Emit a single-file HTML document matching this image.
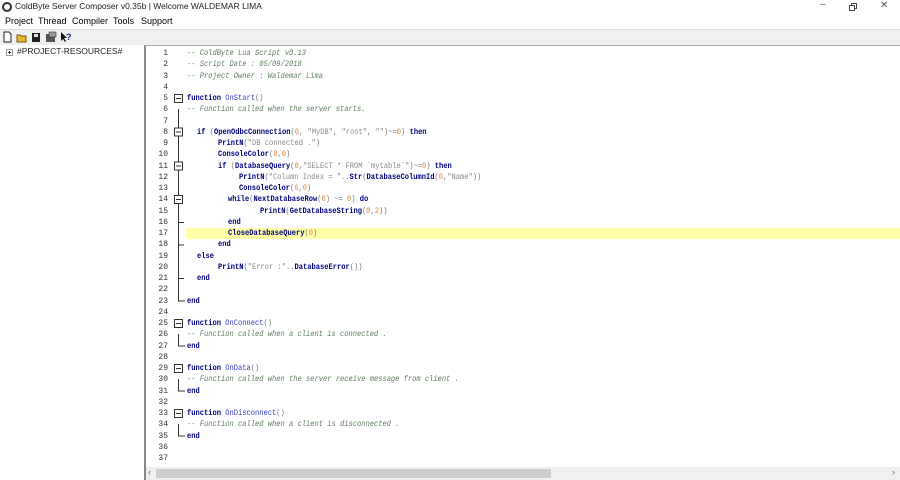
<!DOCTYPE html>
<html><head><meta charset="utf-8"><style>
*{margin:0;padding:0;box-sizing:border-box}
body{width:900px;height:480px;overflow:hidden;background:#fff;font-family:"Liberation Sans",sans-serif;position:relative}
.t{position:absolute;font-size:9px;color:#000;white-space:nowrap}
#code{position:absolute;left:0;top:48px;font-family:"Liberation Mono",monospace;font-size:8px;}
.l{position:absolute;height:11.25px;line-height:11.25px;white-space:pre;transform:scaleX(0.885);transform-origin:0 50%}
.n{position:absolute;width:20px;text-align:right;left:148px;font-family:"Liberation Mono",monospace;font-size:8px;color:#333;line-height:11.25px;height:11.25px}
.c{color:#5f7f5f;font-style:italic}
.k{color:#00007f;font-weight:bold}
.f{color:#3a3acf}
.s{color:#8a8a8a}
.d{color:#e0803a}
.p{color:#777}
</style></head><body>
<div style="position:absolute;left:0;top:0;width:900px;height:14px;background:#fff"></div>
<svg style="position:absolute;left:2px;top:2px" width="10" height="10"><circle cx="5" cy="5" r="4" fill="none" stroke="#333" stroke-width="2"/></svg>
<div class="t" style="left:15px;top:1px;font-size:8.5px;color:#222">ColdByte Server Composer v0.35b | Welcome WALDEMAR LIMA</div>
<div class="t" style="left:820px;top:-1px;font-size:10px;color:#555">–</div>
<svg style="position:absolute;left:849px;top:3px" width="9" height="8"><rect x="0.5" y="2.5" width="5" height="5" fill="none" stroke="#444"/><path d="M2.5 2.5V.5h5v5h-2" fill="none" stroke="#444"/></svg>
<div class="t" style="left:880px;top:0px;font-size:10px;color:#555">✕</div>
<div class="t" style="left:5px;top:16px">Project</div>
<div class="t" style="left:38px;top:16px">Thread</div>
<div class="t" style="left:72px;top:16px">Compiler</div>
<div class="t" style="left:113px;top:16px">Tools</div>
<div class="t" style="left:141px;top:16px">Support</div>
<div style="position:absolute;left:0;top:29px;width:900px;height:16px;background:#f0f0f0;border-top:1px solid #ddd"></div>
<svg style="position:absolute;left:2px;top:31px" width="80" height="12">
<path d="M2 1h5l2 2v8H2z" fill="#fff" stroke="#222"/>
<path d="M15 4h3l1 1h5v6h-9z" fill="#e8b830" stroke="#7a5a10"/>
<rect x="30" y="2" width="8" height="9" fill="#222"/><rect x="32" y="3" width="4" height="3" fill="#ddd"/>
<rect x="44" y="3" width="9" height="8" fill="#555"/><rect x="47" y="1" width="7" height="5" fill="#999" stroke="#333" stroke-width=".6"/>
<path d="M59 1v9l2-2 2 3 1-1-2-3h3z" fill="#111"/><text x="64" y="9" font-size="9" font-weight="bold" fill="#1a2a8a" font-family="Liberation Sans">?</text>
</svg>
<div style="position:absolute;left:0;top:45px;width:144px;height:435px;background:#fff"></div>
<svg style="position:absolute;left:6px;top:49px" width="7" height="7"><rect x=".5" y=".5" width="6" height="6" fill="#fff" stroke="#999"/><path d="M2 3.5h3M3.5 2v3" stroke="#444"/></svg>
<div class="t" style="left:17px;top:46px;font-size:8.5px;color:#222">#PROJECT-RESOURCES#</div>
<div style="position:absolute;left:144px;top:45px;width:756px;height:435px;border-left:2px solid #888;border-top:1px solid #aaa;background:#fff"></div>
<div style="position:absolute;left:186px;top:228px;width:714px;height:11.25px;background:#ffffa8"></div>
<div id="code">
<div class="n" style="top:0">1</div><div class="n" style="top:11.25px">2</div><div class="n" style="top:22.5px">3</div><div class="n" style="top:33.75px">4</div><div class="n" style="top:45px">5</div><div class="n" style="top:56.25px">6</div><div class="n" style="top:67.5px">7</div><div class="n" style="top:78.75px">8</div><div class="n" style="top:90px">9</div><div class="n" style="top:101.25px">10</div><div class="n" style="top:112.5px">11</div><div class="n" style="top:123.75px">12</div><div class="n" style="top:135px">13</div><div class="n" style="top:146.25px">14</div><div class="n" style="top:157.5px">15</div><div class="n" style="top:168.75px">16</div><div class="n" style="top:180px">17</div><div class="n" style="top:191.25px">18</div><div class="n" style="top:202.5px">19</div><div class="n" style="top:213.75px">20</div><div class="n" style="top:225px">21</div><div class="n" style="top:236.25px">22</div><div class="n" style="top:247.5px">23</div><div class="n" style="top:258.75px">24</div><div class="n" style="top:270px">25</div><div class="n" style="top:281.25px">26</div><div class="n" style="top:292.5px">27</div><div class="n" style="top:303.75px">28</div><div class="n" style="top:315px">29</div><div class="n" style="top:326.25px">30</div><div class="n" style="top:337.5px">31</div><div class="n" style="top:348.75px">32</div><div class="n" style="top:360px">33</div><div class="n" style="top:371.25px">34</div><div class="n" style="top:382.5px">35</div><div class="n" style="top:393.75px">36</div><div class="n" style="top:405px">37</div>

<div class="l c" style="left:187px;top:0">-- ColdByte Lua Script v0.13</div>
<div class="l c" style="left:187px;top:11.25px">-- Script Date : 05/09/2018</div>
<div class="l c" style="left:187px;top:22.5px">-- Project Owner : Waldemar Lima</div>
<div class="l" style="left:187px;top:45px"><span class="k">function</span> <span class="f">OnStart</span><span class="p">()</span></div>
<div class="l c" style="left:187px;top:56.25px">-- Function called when the server starts.</div>
<div class="l" style="left:197px;top:78.75px"><span class="k">if</span> <span class="p">(</span><span class="k">OpenOdbcConnection</span><span class="p">(</span><span class="d">0</span><span class="p">, </span><span class="s">"MyDB"</span><span class="p">, </span><span class="s">"root"</span><span class="p">, </span><span class="s">""</span><span class="p">)~=</span><span class="d">0</span><span class="p">)</span> <span class="k">then</span></div>
<div class="l" style="left:218px;top:90px"><span class="k">PrintN</span><span class="p">(</span><span class="s">"DB connected ."</span><span class="p">)</span></div>
<div class="l" style="left:218px;top:101.25px"><span class="k">ConsoleColor</span><span class="p">(</span><span class="d">8</span><span class="p">,</span><span class="d">0</span><span class="p">)</span></div>
<div class="l" style="left:218px;top:112.5px"><span class="k">if</span> <span class="p">(</span><span class="k">DatabaseQuery</span><span class="p">(</span><span class="d">0</span><span class="p">,</span><span class="s">"SELECT * FROM `mytable`"</span><span class="p">)~=</span><span class="d">0</span><span class="p">)</span> <span class="k">then</span></div>
<div class="l" style="left:239px;top:123.75px"><span class="k">PrintN</span><span class="p">(</span><span class="s">"Column Index = "</span><span class="p">..</span><span class="k">Str</span><span class="p">(</span><span class="k">DatabaseColumnId</span><span class="p">(</span><span class="d">0</span><span class="p">,</span><span class="s">"Name"</span><span class="p">))</span></div>
<div class="l" style="left:239px;top:135px"><span class="k">ConsoleColor</span><span class="p">(</span><span class="d">6</span><span class="p">,</span><span class="d">0</span><span class="p">)</span></div>
<div class="l" style="left:228px;top:146.25px"><span class="k">while</span><span class="p">(</span><span class="k">NextDatabaseRow</span><span class="p">(</span><span class="d">0</span><span class="p">) ~= </span><span class="d">0</span><span class="p">)</span> <span class="k">do</span></div>
<div class="l" style="left:260px;top:157.5px"><span class="k">PrintN</span><span class="p">(</span><span class="k">GetDatabaseString</span><span class="p">(</span><span class="d">0</span><span class="p">,</span><span class="d">2</span><span class="p">))</span></div>
<div class="l k" style="left:228px;top:168.75px">end</div>
<div class="l" style="left:228px;top:180px"><span class="k">CloseDatabaseQuery</span><span class="p">(</span><span class="d">0</span><span class="p">)</span></div>
<div class="l k" style="left:218px;top:191.25px">end</div>
<div class="l k" style="left:197px;top:202.5px">else</div>
<div class="l" style="left:218px;top:213.75px"><span class="k">PrintN</span><span class="p">(</span><span class="s">"Error :"</span><span class="p">..</span><span class="k">DatabaseError</span><span class="p">())</span></div>
<div class="l k" style="left:197px;top:225px">end</div>
<div class="l k" style="left:187px;top:247.5px">end</div>
<div class="l" style="left:187px;top:270px"><span class="k">function</span> <span class="f">OnConnect</span><span class="p">()</span></div>
<div class="l c" style="left:187px;top:281.25px">-- Function called when a client is connected .</div>
<div class="l k" style="left:187px;top:292.5px">end</div>
<div class="l" style="left:187px;top:315px"><span class="k">function</span> <span class="f">OnData</span><span class="p">()</span></div>
<div class="l c" style="left:187px;top:326.25px">-- Function called when the server receive message from client .</div>
<div class="l k" style="left:187px;top:337.5px">end</div>
<div class="l" style="left:187px;top:360px"><span class="k">function</span> <span class="f">OnDisconnect</span><span class="p">()</span></div>
<div class="l c" style="left:187px;top:371.25px">-- Function called when a client is disconnected .</div>
<div class="l k" style="left:187px;top:382.5px">end</div>
</div>
<svg style="position:absolute;left:170px;top:48px" width="16" height="420" stroke="#333" stroke-width="1" fill="none">
<path d="M8.5 61V253H15"/>
<path d="M8.5 174.5H14M8.5 197H14M8.5 230.5H14"/>
<path d="M8.5 286V298H15M8.5 331V343H15M8.5 376V388H15"/>
<g fill="#fff"><rect x="4.5" y="46.5" width="8" height="8"/><rect x="4.5" y="80" width="8" height="8"/><rect x="4.5" y="114" width="8" height="8"/><rect x="4.5" y="147.5" width="8" height="8"/><rect x="4.5" y="271.5" width="8" height="8"/><rect x="4.5" y="316.5" width="8" height="8"/><rect x="4.5" y="361.5" width="8" height="8"/></g>
<path d="M6 50.5h5M6 84h5M6 118h5M6 151.5h5M6 275.5h5M6 320.5h5M6 365.5h5"/>
</svg>
<div style="position:absolute;left:146px;top:467px;width:754px;height:13px;background:#f0f0f0"></div>
<div style="position:absolute;left:156px;top:469px;width:395px;height:9px;background:#cdcdcd"></div>
<div class="t" style="left:148px;top:467px;font-size:9px;color:#666">‹</div>
<div class="t" style="left:892px;top:467px;font-size:9px;color:#666">›</div>
</body></html>
